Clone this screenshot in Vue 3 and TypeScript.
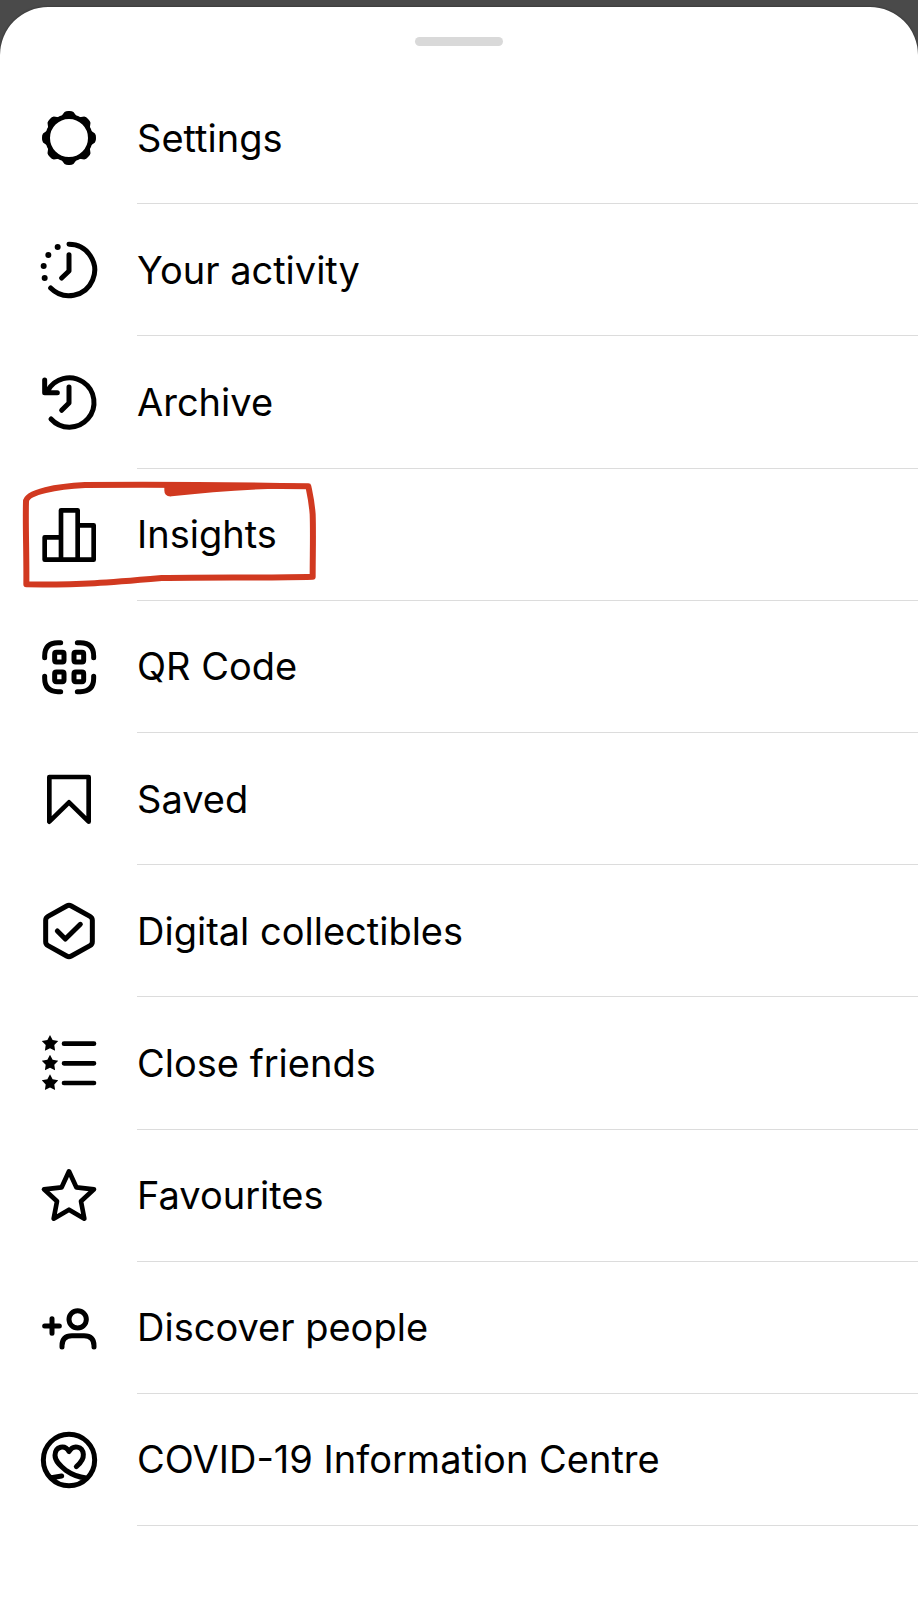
<script setup lang="ts">
interface MenuItem {
  label: string
  stroke?: string
  width?: number
  fill?: string
  marked?: boolean
}

const circle = (cx: number, cy: number, r: number): string =>
  `M${cx - r} ${cy}a${r} ${r} 0 1 1 ${2 * r} 0a${r} ${r} 0 1 1 ${-2 * r} 0Z`

const star = (cx: number, cy: number, r: number): string => {
  const points = Array.from({ length: 10 }, (_, i) => {
    const radius = i % 2 ? r * 0.52 : r
    const angle = (i * Math.PI) / 5 - Math.PI / 2
    return `${(cx + radius * Math.cos(angle)).toFixed(1)} ${(cy + radius * Math.sin(angle)).toFixed(1)}`
  })
  return `M${points.join('L')}Z`
}

const gearTeeth = (): string =>
  Array.from({ length: 8 }, (_, i) => {
    const a = (i * Math.PI) / 4
    const at = (r: number, offset: number) =>
      `${(r * Math.cos(a + offset)).toFixed(1)} ${(r * Math.sin(a + offset)).toFixed(1)}`
    return `M${at(64, -0.38)}L${at(70, -0.32)}L${at(79, -0.17)}Q${at(82, -0.1)} ${at(81, 0)}Q${at(82, 0.1)} ${at(79, 0.17)}L${at(70, 0.32)}L${at(64, 0.38)}Z`
  }).join('')

const items: MenuItem[] = [
  { label: 'Settings', stroke: circle(0, 0, 64), width: 14, fill: gearTeeth() },
  {
    label: 'Your activity',
    stroke: 'M0-77A77 77 0 1 1-55 54M0-46V3L-22 24',
    width: 15,
    fill: circle(-34, -69, 9) + circle(-62, -45, 9) + circle(-76, -12, 9) + circle(-73, 24, 9),
  },
  {
    label: 'Archive',
    stroke: 'M-54 51A74 74 0 1 0-65-32M-73-66V-28H-35M0-45V3L-22 25',
    width: 15,
  },
  {
    label: 'Insights',
    stroke: 'M-73 7H-24V74H-73ZM-24-74H26V74H-24ZM26-29H74V74H26Z',
    width: 14,
    marked: true,
  },
  {
    label: 'QR Code',
    stroke:
      'M-73-28V-33Q-73-73-33-73H-25M25-73H34Q74-73 74-33V-28M74 28V34Q74 74 34 74H25M-25 74H-33Q-73 74-73 34V28' +
      'M-38-44H-20Q-15-44-15-39V-20Q-15-15-20-15H-38Q-43-15-43-20V-39Q-43-44-38-44Z' +
      'M20-44H39Q44-44 44-39V-20Q44-15 39-15H20Q15-15 15-20V-39Q15-44 20-44Z' +
      'M-38 15H-20Q-15 15-15 20V39Q-15 44-20 44H-38Q-43 44-43 39V20Q-43 15-38 15Z' +
      'M20 15H39Q44 15 44 20V39Q44 44 39 44H20Q15 44 15 39V20Q15 15 20 15Z',
    width: 15,
  },
  { label: 'Saved', stroke: 'M-59-66H59V68L0 10L-59 68Z', width: 14 },
  {
    label: 'Digital collectibles',
    stroke:
      'M-7-75Q0-79 7-75L63-44Q70-40 70-32V32Q70 40 63 44L7 75Q0 79-7 75L-63 44Q-70 40-70 32V-32Q-70-40-63-44Z' +
      'M-35 0L-11 24L34-20',
    width: 15,
  },
  {
    label: 'Close friends',
    stroke: 'M-15-58H75M-15 1H75M-15 60H75',
    width: 14,
    fill: star(-57, -58, 26) + star(-57, 1, 26) + star(-57, 60, 26),
  },
  {
    label: 'Favourites',
    stroke: 'M0-74L22-26L75-20L36 16L46 68L0 41L-46 68L-36 16L-75-20L-22-26Z',
    width: 14,
  },
  {
    label: 'Discover people',
    stroke: circle(26, -26, 26) + 'M-73-6H-29M-51-28V16M-21 57V53Q-21 23 9 23H45Q75 23 75 53V57',
    width: 15,
  },
  {
    label: 'COVID-19 Information Centre',
    stroke:
      circle(0, 0, 77) +
      'M22 20C37 7 44-5 43-17C41-42 12-47 0-25C-12-47-41-42-42-14C-42 5-25 19-8 32C9 44 29 52 52 54M-53 53L-22 48',
    width: 15,
  },
]
</script>

<template>
  <main class="screen">
    <section class="sheet" aria-label="Menu">
      <div class="handle"></div>
      <ul class="menu">
        <li v-for="item in items" :key="item.label" class="row">
          <a class="link" href="#">
            <svg class="icon" viewBox="-120 -120 240 240" aria-hidden="true">
              <path v-if="item.fill" class="solid" :d="item.fill" />
              <path class="line" :d="item.stroke" :stroke-width="item.width" />
            </svg>
            <span class="label">{{ item.label }}</span>
          </a>
          <svg v-if="item.marked" class="marker" viewBox="0 0 930 390" aria-hidden="true">
            <path
              class="marker-line"
              d="M880 46C650 42 400 40 210 42C130 46 33 62 33 92C31 160 35 250 34 340C200 342 280 335 440 321C600 318 750 321 893 317C893 250 895 190 893 130C890 90 885 70 880 46Z"
            />
            <path class="marker-fill" d="M448 38L840 38L880 50C740 52 600 61 470 76Q447 78 448 56Z" />
          </svg>
        </li>
      </ul>
    </section>
  </main>
</template>

<style>
body {
  margin: 0;
  background: #4a4a4a;
}
</style>

<style scoped>
.screen {
  display: flex;
  min-height: 100vh;
  padding-top: 7px;
  box-sizing: border-box;
  background: #4a4a4a;
  font-family: Inter, "Liberation Sans", sans-serif;
}
.sheet {
  display: flex;
  flex: 1;
  flex-direction: column;
  min-width: 0;
  padding: 30px 0 74px;
  border-radius: 48px 48px 0 0;
  background: #fff;
  box-shadow: 0 0 2px #222;
}
.handle {
  align-self: center;
  width: 88px;
  height: 9px;
  border-radius: 5px;
  background: #d9d9d9;
}
.menu {
  display: flex;
  flex: 1;
  flex-direction: column;
  margin: 26px 0 0;
  padding: 0;
  list-style: none;
}
.row {
  position: relative;
  display: flex;
  flex: 1;
}
.link {
  display: flex;
  flex: 1;
  gap: 28px;
  align-items: stretch;
  min-width: 0;
  padding-left: 29px;
  color: #000;
  text-decoration: none;
}
.icon {
  flex: none;
  align-self: center;
  width: 80px;
  height: 80px;
}
.line {
  fill: none;
  stroke: #000;
  stroke-linecap: round;
  stroke-linejoin: round;
}
.solid {
  fill: #000;
}
.label {
  display: flex;
  flex: 1;
  align-items: center;
  min-height: 100px;
  border-bottom: 1px solid #dcdcdc;
  font-size: 38px;
  line-height: 48px;
}
.marker {
  position: absolute;
  top: 2px;
  left: 15px;
  width: 310px;
  height: 130px;
  pointer-events: none;
}
.marker-line {
  fill: none;
  stroke: #d13920;
  stroke-width: 18;
  stroke-linejoin: round;
}
.marker-fill {
  fill: #d13920;
}
</style>
